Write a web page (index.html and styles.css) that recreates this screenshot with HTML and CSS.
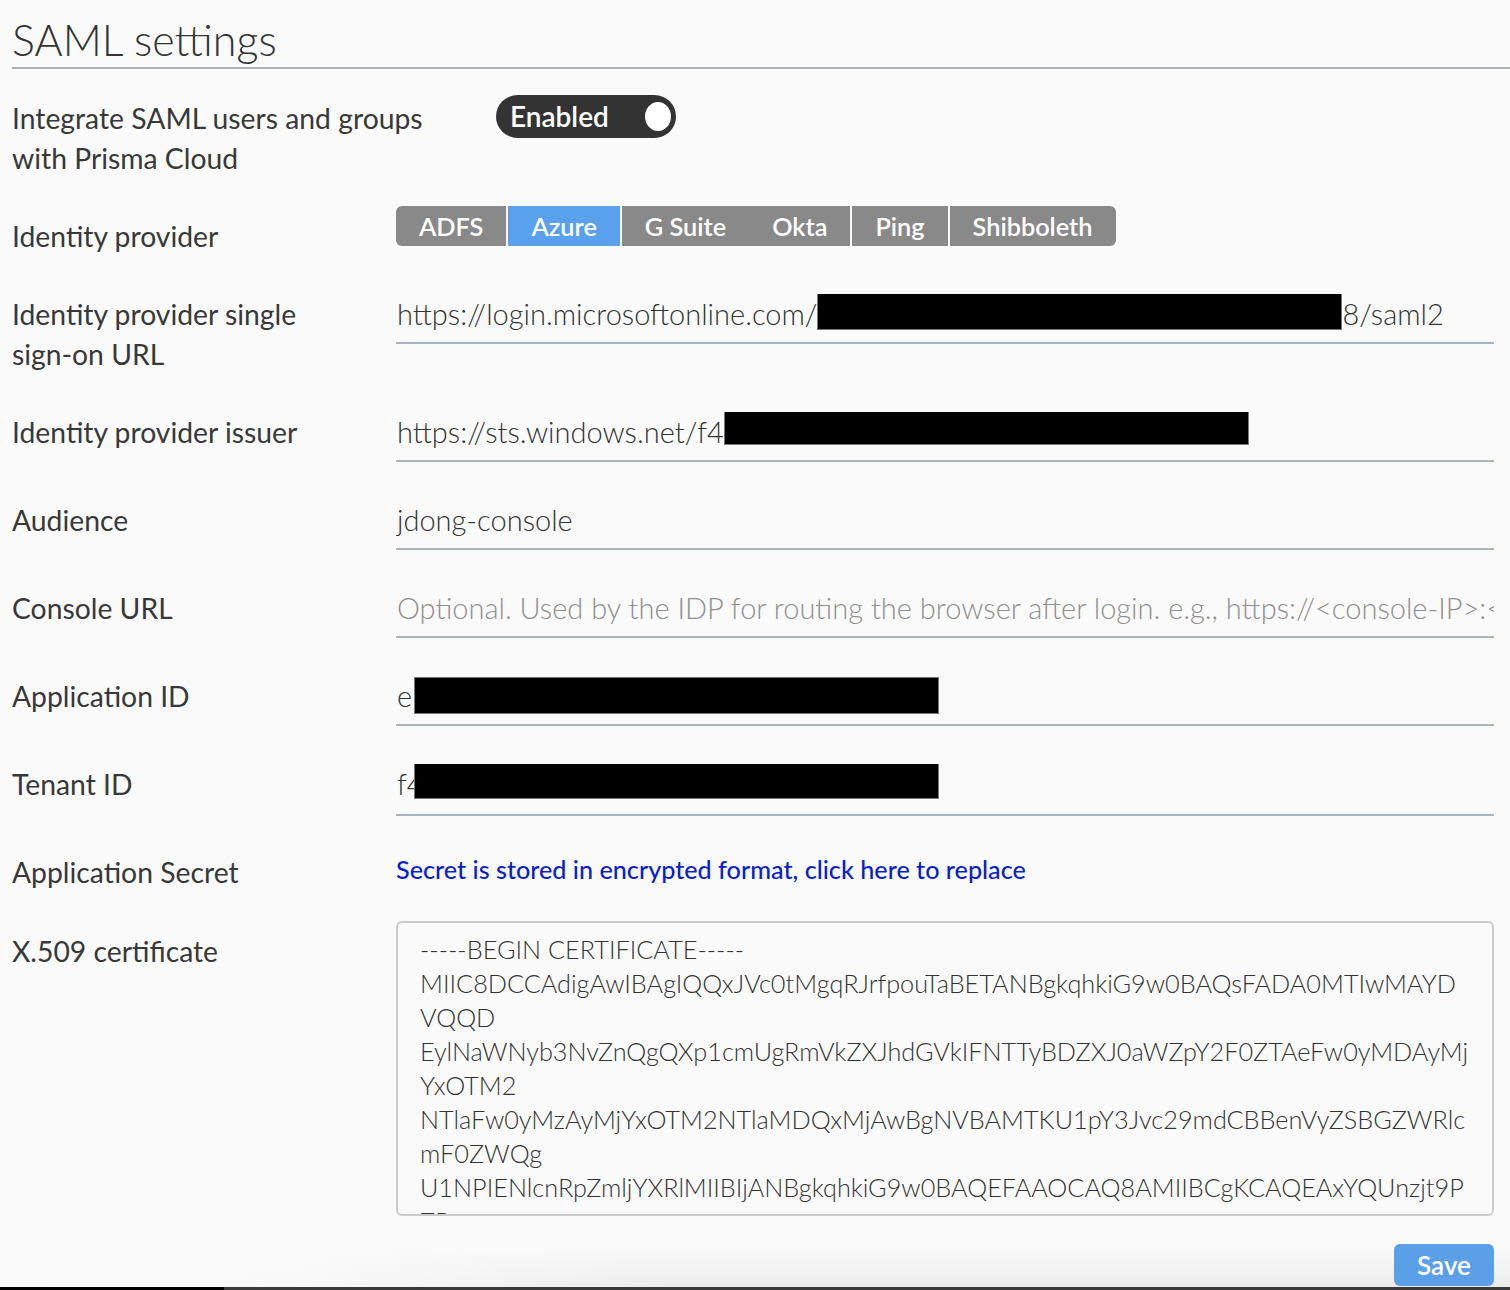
FILE: index.html
```html
<!DOCTYPE html>
<html lang="en">
<head>
<meta charset="utf-8">
<title>SAML settings</title>
<link rel="stylesheet" href="styles.css">
</head>
<body>
<div class="page">
  <h1 class="title">SAML settings</h1>
  <div class="rule"></div>

  <div class="row-toggle">
    <div class="label label-wide">Integrate SAML users and groups with Prisma Cloud</div>
    <div class="toggle"><span class="toggle-text">Enabled</span><span class="knob"></span></div>
  </div>

  <div class="form">
    <div class="label">Identity provider</div>
    <div class="segments">
      <span class="seg seg-first">ADFS</span>
      <span class="seg seg-active">Azure</span>
      <span class="seg">G Suite</span>
      <span class="seg seg-joined">Okta</span>
      <span class="seg">Ping</span>
      <span class="seg seg-last">Shibboleth</span>
    </div>

    <div class="label">Identity provider single <span class="nowrap">sign-on</span> URL</div>
    <div class="field">https://login.microsoftonline.com/<span class="redact redact-sso"></span>8/saml2</div>

    <div class="label">Identity provider issuer</div>
    <div class="field">https://sts.windows.net/f4<span class="redact redact-issuer"></span></div>

    <div class="label">Audience</div>
    <div class="field">jdong-console</div>

    <div class="label">Console URL</div>
    <div class="field field-placeholder">Optional. Used by the IDP for routing the browser after login. e.g., https://&lt;console-IP&gt;:&lt;port&gt;</div>

    <div class="label">Application ID</div>
    <div class="field">e<span class="redact redact-app"></span></div>

    <div class="label">Tenant ID</div>
    <div class="field field-tenant">f4<span class="redact redact-tenant"></span></div>

    <div class="label">Application Secret</div>
    <div class="link-cell"><a class="secret-link" href="#">Secret is stored in encrypted format, click here to replace</a></div>

    <div class="label">X.509 certificate</div>
    <div class="cert">-----BEGIN CERTIFICATE-----
MIIC8DCCAdigAwIBAgIQQxJVc0tMgqRJrfpouTaBETANBgkqhkiG9w0BAQsFADA0MTIwMAYD
VQQD
EylNaWNyb3NvZnQgQXp1cmUgRmVkZXJhdGVkIFNTTyBDZXJ0aWZpY2F0ZTAeFw0yMDAyMj
YxOTM2
NTlaFw0yMzAyMjYxOTM2NTlaMDQxMjAwBgNVBAMTKU1pY3Jvc29mdCBBenVyZSBGZWRlc
mF0ZWQg
U1NPIENlcnRpZmljYXRlMIIBIjANBgkqhkiG9w0BAQEFAAOCAQ8AMIIBCgKCAQEAxYQUnzjt9P
ZP</div>
  </div>

  <div class="actions">
    <button class="save" type="button">Save</button>
  </div>
  <div class="bottom-bar"></div>
</div>
</body>
</html>
```

FILE: styles.css
```css
* {
  box-sizing: border-box;
}

html, body {
  margin: 0;
  padding: 0;
  background: #fafafa;
}

body {
  font-family: "Lato", "Open Sans", "Liberation Sans", sans-serif;
  color: #333333;
  width: 1510px;
  height: 1290px;
  overflow: hidden;
}

.page {
  padding-top: 16px;
  padding-left: 12px;
  height: 1290px;
  display: flex;
  flex-direction: column;
}

.title {
  margin: 0;
  font-size: 43px;
  line-height: 48px;
  font-weight: 300;
  color: #333333;
}

.rule {
  margin-top: 3px;
  height: 2px;
  background: #a9b1b9;
}

.row-toggle {
  display: flex;
  align-items: flex-start;
  margin-top: 29px;
}

.label {
  font-size: 28.3px;
  line-height: 40px;
  font-weight: 400;
  color: #383838;
  padding-right: 20px;
}

.nowrap {
  white-space: nowrap;
}

.label-wide {
  width: 484px;
}

.toggle {
  margin-top: -3px;
  width: 180px;
  height: 43px;
  border-radius: 22px;
  background: #333333;
  display: flex;
  align-items: center;
  justify-content: space-between;
  padding: 0 5px 0 14px;
}

.toggle-text {
  color: #ffffff;
  font-size: 28px;
  font-weight: 600;
  line-height: 43px;
}

.knob {
  width: 26px;
  height: 29px;
  border-radius: 50%;
  background: #ffffff;
}

.form {
  margin-top: 38px;
  display: grid;
  grid-template-columns: 384px 1098px;
  row-gap: 38px;
  align-items: start;
}

.segments {
  margin-top: -10px;
  display: flex;
  height: 40px;
}

.seg {
  display: flex;
  align-items: center;
  height: 40px;
  padding: 0 23px;
  background: #898989;
  color: #ffffff;
  font-size: 25.3px;
  font-weight: 600;
  border-left: 2px solid #fafafa;
}

.seg-first {
  border-left: 0;
  border-radius: 6px 0 0 6px;
}

.seg-joined {
  border-left: 0;
}

.seg-last {
  border-radius: 0 6px 6px 0;
}

.seg-active {
  background: #59a1ed;
}

.field {
  font-size: 29px;
  line-height: 40px;
  height: 50px;
  font-weight: 300;
  color: #333333;
  padding: 0 0 8px 1px;
  border-bottom: 2px solid #a9b1b9;
  white-space: nowrap;
  overflow: hidden;
}

.field-tenant {
  height: 52px;
  padding-bottom: 10px;
  margin-bottom: -2px;
}

.field-placeholder {
  color: #8f8f8f;
}

.redact {
  display: inline-block;
  width: 525px;
  height: 37px;
  background: #000000;
  border: 1px solid #777777;
  vertical-align: top;
}

.redact-sso {
  margin-top: -1px;
}

.redact-issuer {
  margin-top: -4px;
}

.redact-app {
  margin-top: 1px;
  margin-left: 2px;
}

.redact-tenant {
  margin-top: -2px;
  margin-left: -10px;
}

.link-cell {
  margin-top: -3px;
  line-height: 40px;
}

.secret-link {
  color: #0b1fcb;
  text-decoration: none;
  font-size: 25.2px;
  font-weight: 500;
}

.cert {
  margin-top: -10px;
  height: 295px;
  border: 2px solid #cbcbcb;
  border-radius: 6px;
  padding: 9px 22px 0 22px;
  font-size: 25.25px;
  line-height: 34px;
  font-weight: 300;
  color: #333333;
  white-space: pre;
  overflow: hidden;
  background: #fafafa;
}

.actions {
  flex: 1;
  display: flex;
  justify-content: flex-end;
  align-items: flex-end;
  padding-right: 16px;
  margin-left: -12px;
  background:
    linear-gradient(90deg, #fafafa 0%, rgba(250,250,250,0.9) 20%, rgba(250,250,250,0) 45%),
    linear-gradient(180deg, #fafafa 0%, #fafafa 40%, #ececec 100%);
}

.save {
  width: 100px;
  height: 42px;
  border: 0;
  border-radius: 6px;
  background: #5a9fe8;
  color: #ffffff;
  font-family: "Lato", "Open Sans", sans-serif;
  font-size: 26px;
  font-weight: 600;
  padding: 0;
  margin-bottom: 1px;
}

.bottom-bar {
  margin-left: -12px;
  height: 3px;
  background: linear-gradient(90deg, #000000 0, #000000 224px, #3a3a3a 224px);
}
```
